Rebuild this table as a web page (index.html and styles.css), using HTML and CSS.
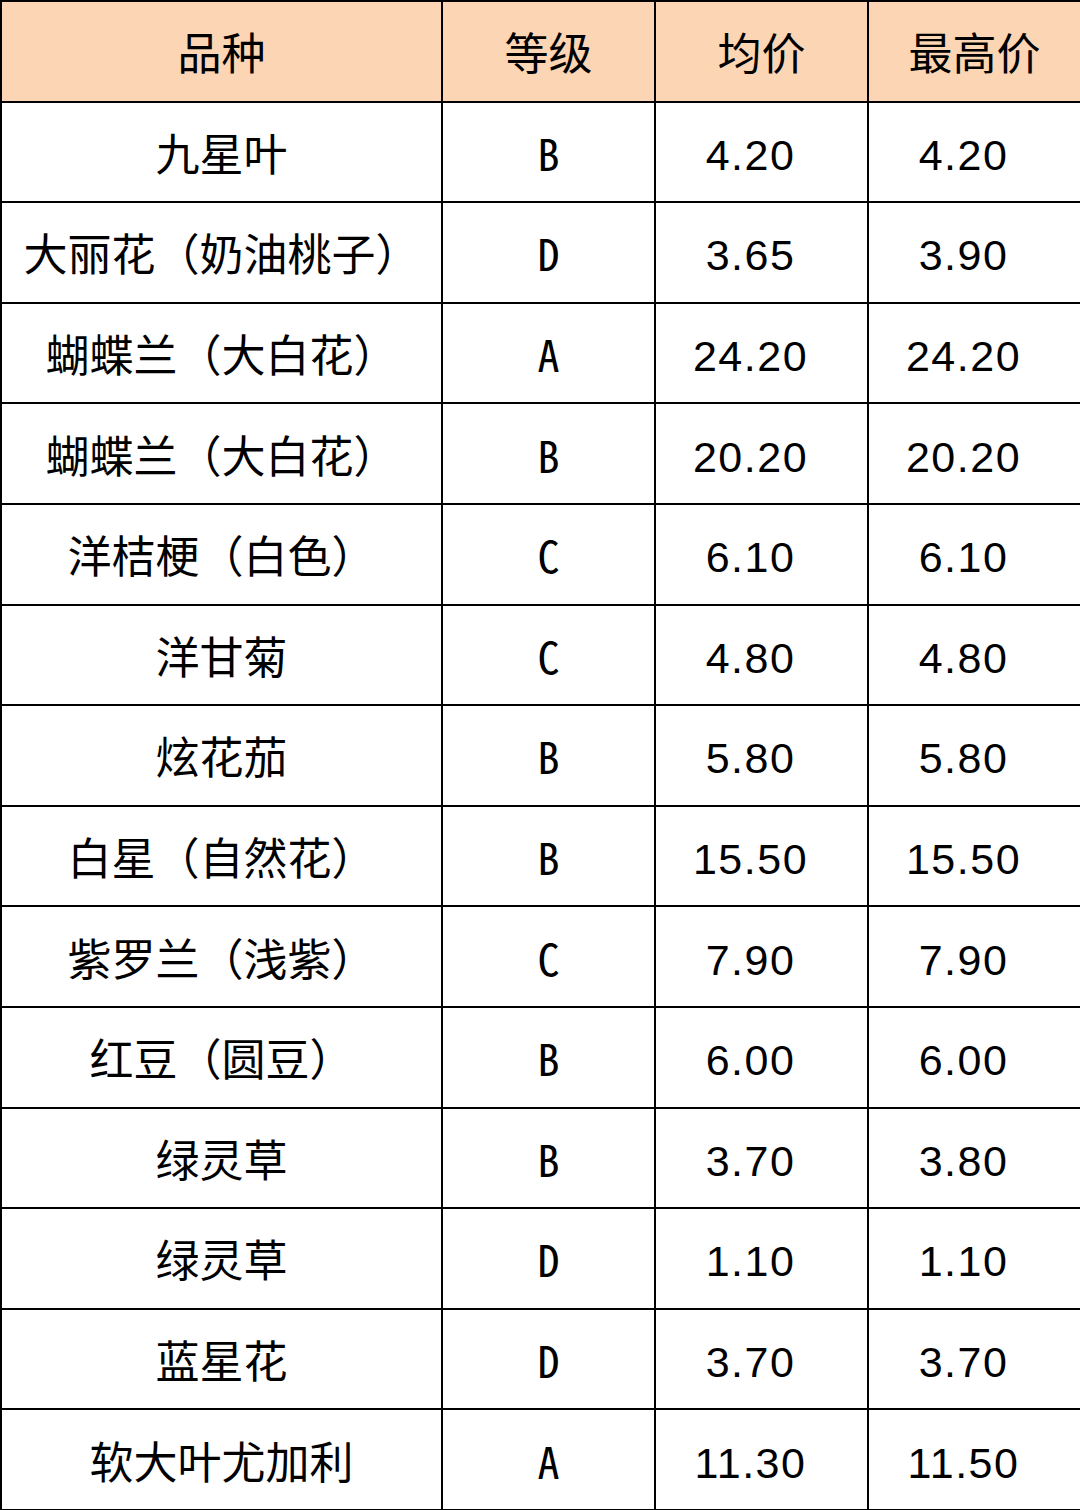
FILE: index.html
```html
<!DOCTYPE html>
<html lang="zh-CN">
<head>
<meta charset="utf-8">
<link rel="stylesheet" href="styles.css">
</head>
<body>
<table class="grid">
  <colgroup>
    <col class="c-name"><col class="c-grade"><col class="c-avg"><col class="c-max">
  </colgroup>
  <thead>
    <tr class="head"><th>品种</th><th>等级</th><th>均价</th><th>最高价</th></tr>
  </thead>
  <tbody>
    <tr><td class="name">九星叶</td><td class="grade">B</td><td class="price">4.20</td><td class="price">4.20</td></tr>
    <tr><td class="name">大丽花（奶油桃子）</td><td class="grade">D</td><td class="price">3.65</td><td class="price">3.90</td></tr>
    <tr><td class="name">蝴蝶兰（大白花）</td><td class="grade">A</td><td class="price">24.20</td><td class="price">24.20</td></tr>
    <tr><td class="name">蝴蝶兰（大白花）</td><td class="grade">B</td><td class="price">20.20</td><td class="price">20.20</td></tr>
    <tr><td class="name">洋桔梗（白色）</td><td class="grade">C</td><td class="price">6.10</td><td class="price">6.10</td></tr>
    <tr><td class="name">洋甘菊</td><td class="grade">C</td><td class="price">4.80</td><td class="price">4.80</td></tr>
    <tr><td class="name">炫花茄</td><td class="grade">B</td><td class="price">5.80</td><td class="price">5.80</td></tr>
    <tr><td class="name">白星（自然花）</td><td class="grade">B</td><td class="price">15.50</td><td class="price">15.50</td></tr>
    <tr><td class="name">紫罗兰（浅紫）</td><td class="grade">C</td><td class="price">7.90</td><td class="price">7.90</td></tr>
    <tr><td class="name">红豆（圆豆）</td><td class="grade">B</td><td class="price">6.00</td><td class="price">6.00</td></tr>
    <tr><td class="name">绿灵草</td><td class="grade">B</td><td class="price">3.70</td><td class="price">3.80</td></tr>
    <tr><td class="name">绿灵草</td><td class="grade">D</td><td class="price">1.10</td><td class="price">1.10</td></tr>
    <tr><td class="name">蓝星花</td><td class="grade">D</td><td class="price">3.70</td><td class="price">3.70</td></tr>
    <tr><td class="name">软大叶尤加利</td><td class="grade">A</td><td class="price">11.30</td><td class="price">11.50</td></tr>
  </tbody>
</table>
</body>
</html>
```
FILE: styles.css
```css
html, body {
  margin: 0;
  padding: 0;
  background: #ffffff;
}
.grid {
  width: 1080px;
  height: 1510px;
  border-collapse: collapse;
  table-layout: fixed;
  font-family: "Noto Sans CJK SC", "Noto Sans", sans-serif;
  color: #000;
  text-spacing-trim: space-all;
}
.c-name { width: 441px; }
.c-grade { width: 213px; }
.c-avg { width: 213px; }
.c-max { width: 213px; }
.grid th, .grid td {
  border: 2.5px solid #000;
  text-align: center;
  vertical-align: middle;
  padding: 0;
  font-size: 44px;
  font-weight: 400;
  line-height: 1;
}
.grid tr { height: 100.6px; }
.head th {
  background: #fcd5b4;
}
.grade {
  font-family: "Noto Sans Mono CJK SC", "Liberation Mono", monospace;
  font-size: 44px;
}
.grid td.price {
  font-family: "Liberation Sans", Arial, sans-serif;
  font-size: 43px;
  letter-spacing: 1.5px;
  padding: 7px 22px 0 0;
}
```
